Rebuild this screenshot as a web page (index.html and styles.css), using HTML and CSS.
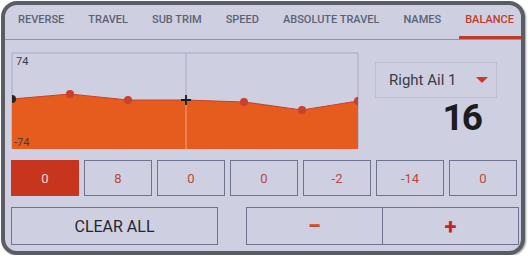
FILE: index.html
```html
<!DOCTYPE html>
<html lang="en">
<head>
  <meta charset="UTF-8">
  <title>Balance</title>
  <link rel="stylesheet" href="styles.css">
</head>
<body>
<div class="frame">
  <ul class="tabs">
    <li>REVERSE</li>
    <li>TRAVEL</li>
    <li>SUB TRIM</li>
    <li>SPEED</li>
    <li>ABSOLUTE TRAVEL</li>
    <li>NAMES</li>
    <li class="active">BALANCE</li>
  </ul>

  <div class="main">
    <svg class="chart" width="350" height="102" viewBox="0 0 350 102">
      <!-- box + grid -->
      <path d="M2 98 V2 H348 V98" fill="none" stroke="#a3a8c2" stroke-width="1"/>
      <line x1="176" y1="2" x2="176" y2="98" stroke="#a3a8c2" stroke-width="1"/>
      <!-- curve -->
      <polygon points="2,48 60,43 118,49 176,49 234,51 292,59 348,50 348,98 2,98" fill="#e65c1f"/>
      <polyline points="2,48 60,43 118,49 176,49 234,51 292,59 348,50" fill="none" stroke="#c8432a" stroke-width="1.2"/>
      <line x1="176" y1="49" x2="176" y2="98" stroke="#f0a27a" stroke-width="1"/>
      <circle cx="60" cy="43" r="4" fill="#c8412b"/>
      <circle cx="118" cy="49" r="4" fill="#c8412b"/>
      <circle cx="234" cy="51" r="4" fill="#c8412b"/>
      <circle cx="292" cy="59" r="4" fill="#c8412b"/>
      <path d="M2 44 A4 4 0 0 1 2 52 Z" fill="#2a2220"/>
      <path d="M348 46 A4 4 0 0 0 348 54 Z" fill="#c8412b"/>
      <!-- cursor -->
      <path d="M176 44 V54 M171 49 H181" stroke="#1e1a1a" stroke-width="1.8"/>
      <text x="6" y="14" class="axis">74</text>
      <text x="4" y="95" class="axis">-74</text>
    </svg>

    <div class="side">
      <div class="select">
        <span>Right Ail 1</span>
        <span class="caret"></span>
      </div>
      <div class="big">16</div>
    </div>
  </div>

  <div class="values">
    <div class="cell selected">0</div>
    <div class="cell">8</div>
    <div class="cell">0</div>
    <div class="cell">0</div>
    <div class="cell">-2</div>
    <div class="cell">-14</div>
    <div class="cell">0</div>
  </div>

  <div class="actions">
    <div class="btn clear">CLEAR ALL</div>
    <div class="steps">
      <div class="btn minus">&minus;</div>
      <div class="btn plus">+</div>
    </div>
  </div>
</div>
</body>
</html>
```

FILE: styles.css
```css
body {
  margin: 0;
  background: #ffffff;
  font-family: Roboto, "Liberation Sans", sans-serif;
}

.frame {
  margin: 1px 0 0 1px;
  width: 516px;
  height: 246px;
  border: 4px solid #5b5d65;
  border-radius: 16px;
  background: #ced0e2;
  box-shadow: 1px 1px 2px #9a9ca4;
  overflow: hidden;
}

ul.tabs {
  list-style: none;
  margin: 0;
  padding: 0 0 0 13px;
  height: 34px;
  display: flex;
  gap: 24px;
  align-items: center;
  border-bottom: 1px solid #8a92b8;
}

ul.tabs li {
  flex-shrink: 0;
  white-space: nowrap;
  font-size: 11px;
  font-weight: 500;
  color: #5d6272;
  height: 34px;
  line-height: 30px;
  box-sizing: border-box;
}

ul.tabs li.active {
  color: #c23a2a;
  border-bottom: 3px solid #c23a2a;
  margin-left: -6px;
  padding: 0 10px 0 6px;
}

.main {
  display: flex;
  margin-top: 11px;
  padding-left: 5px;
}

.chart {
  display: block;
}

.axis {
  font-family: Roboto, "Liberation Sans", sans-serif;
  font-size: 11px;
  fill: #3c3c46;
}

.side {
  margin-left: 15px;
  padding-top: 11px;
  width: 122px;
}

.select {
  height: 34px;
  border: 1px solid #bcc0d4;
  display: flex;
  align-items: center;
  padding-left: 13px;
  font-size: 15px;
  color: #3a3a44;
}

.caret {
  width: 0;
  height: 0;
  margin-left: 20px;
  border-left: 6px solid transparent;
  border-right: 6px solid transparent;
  border-top: 6px solid #d2352a;
}

.big {
  font-size: 37px;
  font-weight: 700;
  letter-spacing: -2px;
  color: #1c1c1e;
  text-align: right;
  padding-right: 16px;
  margin-top: 0;
  line-height: 40px;
}

.values {
  display: flex;
  gap: 5px;
  margin: 7px 0 0 6px;
}

.cell {
  width: 66px;
  height: 34px;
  border: 1px solid #6e7490;
  font-size: 13px;
  color: #b8483c;
  display: flex;
  align-items: center;
  justify-content: center;
}

.cell.selected {
  background: #c7351e;
  border-color: #c7351e;
  color: #f3d7c8;
}

.actions {
  display: flex;
  justify-content: space-between;
  margin: 11px 0 0 6px;
  width: 508px;
}

.btn {
  height: 36px;
  border: 1px solid #6e7490;
  display: flex;
  align-items: center;
  justify-content: center;
}

.clear {
  width: 205px;
  font-size: 16px;
  color: #26262c;
}

.steps {
  display: flex;
}

.minus {
  width: 135px;
  border-right: none;
  font-size: 24px;
  font-weight: 700;
  color: #d24a26;
}

.plus {
  width: 135px;
  font-size: 22px;
  font-weight: 700;
  color: #c8241f;
}
```
